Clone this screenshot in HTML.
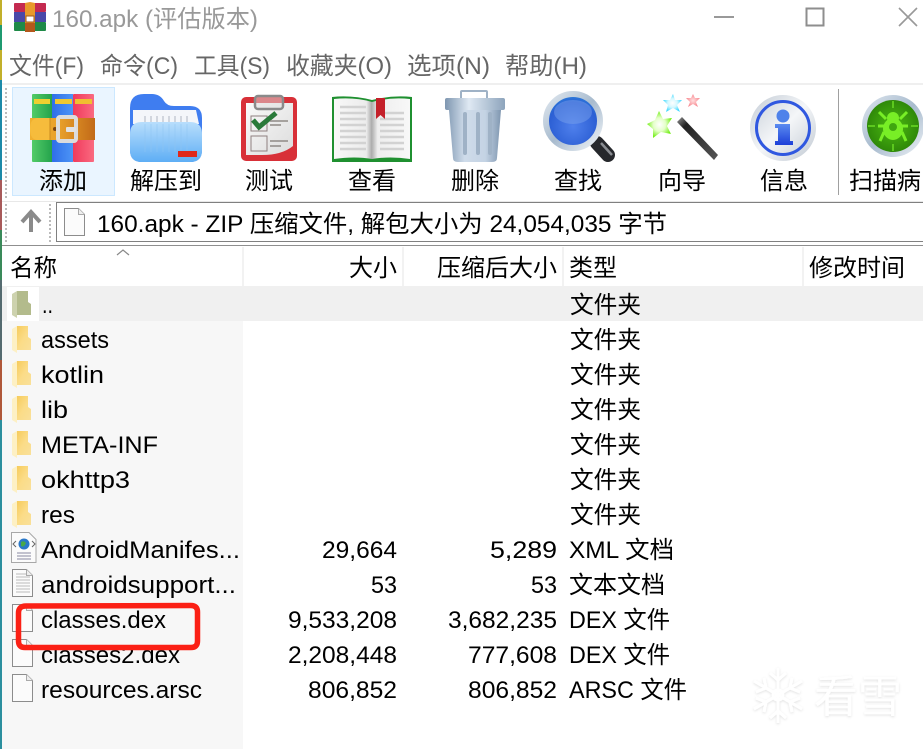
<!DOCTYPE html>
<html lang="zh"><head><meta charset="utf-8"><title>160.apk</title>
<style>
html,body{margin:0;padding:0;background:#fff;width:923px;height:749px;overflow:hidden}
svg{display:block}
text{font-family:"Liberation Sans","Noto Sans CJK SC",sans-serif;font-size:24px;fill:#000}
.t{fill:#999}.m{fill:#666}.h{fill:#1a1a1a}
</style></head><body>
<svg width="923" height="749" viewBox="0 0 923 749" xmlns="http://www.w3.org/2000/svg">
<defs>
<linearGradient id="gG" x1="0" x2="1" y1="0" y2="0"><stop offset="0" stop-color="#52cc68"/><stop offset="1" stop-color="#22a04a"/></linearGradient>
<linearGradient id="gB" x1="0" x2="1" y1="0" y2="0"><stop offset="0" stop-color="#2f6ee8"/><stop offset="1" stop-color="#4d95f6"/></linearGradient>
<linearGradient id="gR" x1="0" x2="1" y1="0" y2="0"><stop offset="0" stop-color="#f03a5c"/><stop offset="1" stop-color="#fa6a80"/></linearGradient>
<linearGradient id="gBelt" x1="0" x2="1" y1="0" y2="0"><stop offset="0" stop-color="#f0b030"/><stop offset=".45" stop-color="#e8a02a"/><stop offset="1" stop-color="#c26a18"/></linearGradient>
<linearGradient id="gFold" x1="0" x2="0" y1="0" y2="1"><stop offset="0" stop-color="#b8defc"/><stop offset="1" stop-color="#5eaef5"/></linearGradient>
<linearGradient id="gPaper" x1="0" x2="1" y1="0" y2="1"><stop offset="0" stop-color="#fafafa"/><stop offset="1" stop-color="#dcdcdc"/></linearGradient>
<linearGradient id="gPageL" x1="0" x2="1"><stop offset="0" stop-color="#f8f8f8"/><stop offset=".85" stop-color="#ececec"/><stop offset="1" stop-color="#a8a8a8"/></linearGradient>
<linearGradient id="gPageR" x1="0" x2="1"><stop offset="0" stop-color="#b0b0b0"/><stop offset=".15" stop-color="#eeeeee"/><stop offset="1" stop-color="#f8f8f8"/></linearGradient>
<linearGradient id="gTrash" x1="0" x2="1"><stop offset="0" stop-color="#8ea4bc"/><stop offset=".3" stop-color="#cfdcea"/><stop offset=".7" stop-color="#c4d3e4"/><stop offset="1" stop-color="#7f96b0"/></linearGradient>
<linearGradient id="gLid" x1="0" x2="1"><stop offset="0" stop-color="#7e96b0"/><stop offset=".4" stop-color="#dfe9f3"/><stop offset="1" stop-color="#8da4bc"/></linearGradient>
<radialGradient id="gLens" cx=".5" cy=".6" r=".6"><stop offset="0" stop-color="#4f80ec"/><stop offset=".75" stop-color="#2c5fd4"/><stop offset="1" stop-color="#2a86dc"/></radialGradient>
<linearGradient id="gRing" x1="0" x2="1" y1="0" y2="1"><stop offset="0" stop-color="#dfe7ef"/><stop offset=".5" stop-color="#a8bbce"/><stop offset="1" stop-color="#eef2f6"/></linearGradient>
<linearGradient id="gInfo" x1="0" x2="1" y1="0" y2="1"><stop offset="0" stop-color="#c4ccd6"/><stop offset=".5" stop-color="#f4f6f8"/><stop offset="1" stop-color="#c0c8d2"/></linearGradient>
<linearGradient id="gI" x1="0" x2="0" y1="0" y2="1"><stop offset="0" stop-color="#5b8cf0"/><stop offset="1" stop-color="#1c3fd8"/></linearGradient>
<radialGradient id="gScan" cx=".5" cy=".5" r=".55"><stop offset="0" stop-color="#4cba12"/><stop offset="1" stop-color="#2c8408"/></radialGradient>
<radialGradient id="gS1"><stop offset="0" stop-color="#fff"/><stop offset=".5" stop-color="#e4ffc8"/><stop offset="1" stop-color="#74ee18"/></radialGradient>
<radialGradient id="gS2"><stop offset="0" stop-color="#fff"/><stop offset=".5" stop-color="#d4f8ff"/><stop offset="1" stop-color="#40d8ff"/></radialGradient>
<radialGradient id="gS3"><stop offset="0" stop-color="#ffe0e0"/><stop offset="1" stop-color="#f88890"/></radialGradient>
<linearGradient id="gWand" x1="0" x2="1" y1="0" y2="1"><stop offset="0" stop-color="#999"/><stop offset=".2" stop-color="#222"/><stop offset="1" stop-color="#555"/></linearGradient>
<linearGradient id="gFY" x1="0" x2="1" y1="0" y2="1"><stop offset="0" stop-color="#f6cb5c"/><stop offset=".5" stop-color="#fbdc88"/><stop offset="1" stop-color="#f9e09a"/></linearGradient>
<g id="fold">
<path d="M5 0H16V11L19 13V24H5Z" fill="url(#gFY)"/>
<path d="M0 3L5 0V27L0 24Z" fill="#fdf0c4"/>
</g>
<g id="pfold">
<path d="M5 0H16V11L19 13V24H5Z" fill="#b3bb8c"/>
<path d="M0 3L5 0V27L0 24Z" fill="#cdd2ae"/>
</g>
<g id="file">
<path d="M.5 .5H14.500L20.500 6.500V27.500H.5Z" fill="#fbfbfb" stroke="#8c8c8c"/>
<path d="M14.500 .5V6.500H20.500" fill="#eee" stroke="#aaa"/>
</g>
<filter id="wm" x="-20%" y="-20%" width="140%" height="140%"><feDropShadow dx="0" dy="1" stdDeviation="1.2" flood-color="#000" flood-opacity=".12"/></filter>
</defs>

<!-- left strip -->
<rect x="0" y="0" width="2" height="749" fill="#2b8f9e"/>
<rect x="0" y="0" width="2" height="25" fill="#c2b02a"/><rect x="0" y="25" width="2" height="25" fill="#1f9a70"/>
<rect x="0" y="50" width="2" height="30" fill="#c2b02a"/><rect x="0" y="80" width="2" height="100" fill="#1d8aa8"/>
<rect x="0" y="180" width="2" height="50" fill="#a85a5a"/><rect x="0" y="230" width="2" height="50" fill="#3a8a5a"/>
<rect x="0" y="280" width="2" height="80" fill="#556b70"/><rect x="0" y="360" width="2" height="60" fill="#b0583a"/>

<!-- title bar -->
<g>
<rect x="14" y="3" width="32" height="9" rx="1" fill="#c42a50"/>
<rect x="14" y="12" width="32" height="10" fill="#4a48a8"/>
<rect x="14" y="22" width="32" height="9" rx="1" fill="#1f8a48"/>
<path d="M25 3 L30 2 L35 3 V32 H25Z" fill="#e89a2a"/>
<rect x="26" y="16" width="8" height="6" fill="#fff" stroke="#a05a18"/>
<rect x="25" y="23" width="10" height="9" fill="#b4581c"/>
</g>
<text class="t" x="52" y="27" textLength="206" lengthAdjust="spacingAndGlyphs">160.apk (评估版本)</text>
<rect x="714" y="16" width="20" height="2" fill="#999"/>
<rect x="806.500" y="8.500" width="17" height="17" fill="none" stroke="#8e8e8e" stroke-width="2"/>
<path d="M899 8L917 26M917 8L899 26" stroke="#999" stroke-width="1.600" fill="none"/>

<!-- menu -->
<g class="m">
<text class="m" x="9" y="74" textLength="75" lengthAdjust="spacingAndGlyphs">文件(F)</text>
<text class="m" x="100" y="74" textLength="78" lengthAdjust="spacingAndGlyphs">命令(C)</text>
<text class="m" x="194" y="74" textLength="76" lengthAdjust="spacingAndGlyphs">工具(S)</text>
<text class="m" x="286" y="74" textLength="106" lengthAdjust="spacingAndGlyphs">收藏夹(O)</text>
<text class="m" x="407" y="74" textLength="83" lengthAdjust="spacingAndGlyphs">选项(N)</text>
<text class="m" x="505" y="74" textLength="82" lengthAdjust="spacingAndGlyphs">帮助(H)</text>
</g>
<rect x="2" y="83" width="921" height="2" fill="#efefef"/>

<!-- toolbar grip -->
<path d="M6 88V198" stroke="#bbb" stroke-width="2" stroke-dasharray="2 2"/>
<rect x="12.500" y="87.500" width="102" height="108" fill="#eaf5ff" stroke="#cce8ff"/>

<!-- add icon -->
<rect x="32" y="94" width="21" height="68" rx="1" fill="url(#gG)"/>
<rect x="52" y="94" width="21" height="68" fill="url(#gB)"/>
<rect x="73" y="94" width="21" height="68" rx="1" fill="url(#gR)"/>
<rect x="34" y="99" width="16" height="5" fill="#eed030"/><rect x="55" y="99" width="17" height="5" fill="#f0c830"/><rect x="75" y="99" width="17" height="5" fill="#f0c030"/>
<rect x="30" y="118" width="65" height="22" fill="url(#gBelt)"/>
<path d="M50 118H38Q30 118 30 129Q30 140 38 140H50Z" fill="#f6bc3c"/>
<path d="M50 118V140" stroke="#c98a1e"/>
<circle cx="55" cy="129" r="2" fill="#7a4410"/>
<rect x="58" y="117" width="18" height="24" rx="2" fill="none" stroke="#dcdcdc" stroke-width="4"/>
<rect x="66" y="127" width="10" height="5" rx="1" fill="#e2e2e2"/>

<!-- extract icon -->
<path d="M130 108Q130 94 144 94H152Q160 94 164 101Q167 106 174 106H190Q202 106 202 118V150Q202 162 190 162H142Q130 162 130 150Z" fill="#3f7df0"/>
<path d="M133 110H196L199 124H133Z" fill="#f4f6fa"/>
<g stroke="#c6ccd4" stroke-width="1.500"><path d="M145 116V128M151 116V128M157 116V128M163 116V128M169 116V128M175 116V128M181 116V128M187 116V128"/></g>
<path d="M130 134Q130 122 142 122H190Q202 122 202 134V150Q202 162 190 162H142Q130 162 130 150Z" fill="url(#gFold)"/>
<g stroke="#8ec4f2" stroke-width="1"><path d="M145 124V152M151 124V152M157 124V152M163 124V152M169 124V152M175 124V152M181 124V152M187 124V152" opacity=".5"/></g>
<rect x="178" y="151" width="19" height="6" fill="#e0281c"/>

<!-- test icon -->
<rect x="241" y="97" width="56" height="64" rx="5" fill="#d83038"/>
<path d="M246 103H293V146Q282 155 262 155H246Z" fill="url(#gPaper)"/>
<rect x="255" y="96" width="28" height="13" rx="3" fill="#dedede" fill-opacity=".5" stroke="#8a8a8a" stroke-width="2.500"/>
<rect x="251" y="116" width="16" height="15" fill="none" stroke="#8f8080" stroke-width="1"/>
<rect x="251" y="136" width="16" height="15" fill="none" stroke="#8f8080" stroke-width="1"/>
<path d="M253 120L259 127L276 113" fill="none" stroke="#2a7a3a" stroke-width="5"/>
<path d="M270 121H288M270 125H281M270 141H288M270 146H281" stroke="#8f8a86" stroke-width="1.500"/>

<!-- view icon -->
<path d="M332 97Q352 95 372 100Q392 95 412 97V162H332Z" fill="#1f9030"/>
<path d="M334 99Q355 97 372 102V159Q355 156 334 159Z" fill="url(#gPageL)"/>
<path d="M372 102Q390 97 410 99V159Q390 156 372 159Z" fill="url(#gPageR)"/>
<g stroke="#d2d2d2" stroke-width="2.500"><path d="M340 107H366M340 113H366M340 119H366M340 125H366M340 131H366M340 137H366M340 143H366M340 149H366"/><path d="M380 113H404M380 119H404M380 125H404M380 131H404M380 137H404M380 143H404M380 149H404"/></g>
<path d="M376 98H385V119L380.500 115L376 119Z" fill="#c4202a"/>

<!-- delete icon -->
<rect x="461" y="91" width="26" height="10" rx="1" fill="none" stroke="#9fb2c6" stroke-width="2"/>
<rect x="445" y="98" width="60" height="12" rx="2" fill="url(#gLid)"/>
<path d="M449 110H501L497 158Q497 162 492 162H458Q453 162 453 158Z" fill="url(#gTrash)"/>
<g stroke="#9fb2c6" stroke-width="4" stroke-linecap="round"><path d="M465 114V153M478 114V153M490 114V153"/></g>

<!-- find icon -->
<path d="M597 143L608 155" stroke="#26282c" stroke-width="14" stroke-linecap="round"/>
<path d="M601 143L612 155" stroke="#8a8d92" stroke-width="2.500"/>
<circle cx="573" cy="121" r="27" fill="url(#gLens)" stroke="url(#gRing)" stroke-width="6"/>
<ellipse cx="573" cy="112" rx="19" ry="12" fill="#7fa6ee" opacity=".45"/>

<!-- wizard icon -->
<path d="M677 122L682 117L718 155L714 160Z" fill="url(#gWand)"/>
<path d="M659 111L663 119L672 118L667 126L671 134L661 132L653 138L653 129L647 124L655 120Z" fill="url(#gS1)"/>
<path d="M673 94L675 100L682 100L677 105L680 112L673 108L666 112L668 105L663 100L670 100Z" fill="url(#gS2)"/>
<path d="M693 94L695 98L700 98L696 102L698 107L693 104L688 107L690 102L686 98L691 98Z" fill="url(#gS3)"/>

<!-- info icon -->
<circle cx="783" cy="128" r="33" fill="url(#gInfo)"/>
<circle cx="783" cy="128" r="26.500" fill="none" stroke="#3058e0" stroke-width="3"/>
<circle cx="783" cy="116" r="6.500" fill="#4f82ea"/>
<path d="M775 124H790V141H793V145H775V141H778V128H775Z" fill="url(#gI)"/>

<!-- separator -->
<rect x="838" y="89" width="1" height="106" fill="#a0a0a0"/>

<!-- scan icon -->
<circle cx="893" cy="126" r="31" fill="url(#gRing)"/>
<circle cx="893" cy="126" r="26" fill="url(#gScan)"/>
<path d="M893 101V108M893 144V151M868 126H875M911 126H918" stroke="#5cc81e" stroke-width="2"/>
<g fill="none" stroke="#78ee26" stroke-width="3"><path d="M879 112L886 119M907 112L900 119M878 126H908M880 141L884 132M906 141L902 132"/></g>
<ellipse cx="893" cy="129" rx="10" ry="11" fill="#78ee26"/><circle cx="893" cy="118" r="6" fill="#78ee26"/>
<circle cx="893" cy="127" r="4" fill="#3fa610"/>

<!-- toolbar labels -->
<text x="39" y="189" textLength="48" lengthAdjust="spacingAndGlyphs">添加</text>
<text x="130" y="189" textLength="72" lengthAdjust="spacingAndGlyphs">解压到</text>
<text x="245" y="189" textLength="48" lengthAdjust="spacingAndGlyphs">测试</text>
<text x="348" y="189" textLength="48" lengthAdjust="spacingAndGlyphs">查看</text>
<text x="451" y="189" textLength="48" lengthAdjust="spacingAndGlyphs">删除</text>
<text x="554" y="189" textLength="48" lengthAdjust="spacingAndGlyphs">查找</text>
<text x="658" y="189" textLength="48" lengthAdjust="spacingAndGlyphs">向导</text>
<text x="760" y="189" textLength="48" lengthAdjust="spacingAndGlyphs">信息</text>
<text x="849" y="189" textLength="72" lengthAdjust="spacingAndGlyphs">扫描病</text>

<!-- address bar -->
<rect x="2" y="201" width="921" height="1" fill="#e8e8e8"/>
<path d="M6 204V243M50 204V243" stroke="#bbb" stroke-width="2" stroke-dasharray="2 2"/>
<path d="M31 212V232M22 222L31 212L40 222" fill="none" stroke="#8a8a8a" stroke-width="4"/>
<path d="M923 202.500H56.500V241.500H923" fill="#fff" stroke="#808080"/>
<use href="#file" x="64" y="208"/>
<text x="97" y="232" textLength="570" lengthAdjust="spacingAndGlyphs">160.apk - ZIP 压缩文件, 解包大小为 24,054,035 字节</text>
<rect x="2" y="245" width="921" height="1" fill="#8f8f8f"/>

<!-- list backgrounds -->
<rect x="2" y="286" width="241" height="463" fill="#f7f7f7"/>
<rect x="2" y="286" width="921" height="35" fill="#f0f0f0"/>
<rect x="7" y="287" width="32" height="34" fill="#fff"/>

<!-- header -->
<path d="M243 247V286M403 247V286M563 247V286M803 247V286" stroke="#e5e5e5"/>
<path d="M117 255L123 250L129 255" fill="none" stroke="#888" stroke-width="1.200"/>
<g class="h">
<text x="10" y="276" textLength="47" lengthAdjust="spacingAndGlyphs">名称</text>
<text x="349" y="276" textLength="48" lengthAdjust="spacingAndGlyphs">大小</text>
<text x="437" y="276" textLength="120" lengthAdjust="spacingAndGlyphs">压缩后大小</text>
<text x="569" y="276" textLength="48" lengthAdjust="spacingAndGlyphs">类型</text>
<text x="809" y="276" textLength="96" lengthAdjust="spacingAndGlyphs">修改时间</text>
</g>

<!-- list icons -->
<use href="#pfold" x="12" y="291"/>
<use href="#fold" x="12" y="326"/><use href="#fold" x="12" y="361"/><use href="#fold" x="12" y="396"/>
<use href="#fold" x="12" y="431"/><use href="#fold" x="12" y="466"/><use href="#fold" x="12" y="501"/>
<g>
<path d="M11.500 532.500H29L36 539.500V562.500H11.500Z" fill="#fbfbfb" stroke="#a8a8a8"/>
<circle cx="24" cy="544" r="5.500" fill="#2a78c8"/><path d="M21 542Q24 540 26 543Q24 548 21 546Z" fill="#48a848"/>
<path d="M16 541L13 544L16 547M32 541L35 544L32 547" stroke="#666" fill="none"/>
<path d="M17 553H31M17 556H31M17 559H31" stroke="#8888a0"/>
</g>
<g><use href="#file" x="12" y="569"/><path d="M16 574H26M16 577H30M16 580H30M16 583H30M16 586H30M16 589H30M16 592H30" stroke="#bbb"/></g>
<use href="#file" x="12" y="604"/><use href="#file" x="12" y="639"/><use href="#file" x="12" y="674"/>

<!-- names -->
<text x="42" y="313" textLength="11" lengthAdjust="spacingAndGlyphs">..</text>
<text x="41" y="348" textLength="68" lengthAdjust="spacingAndGlyphs">assets</text>
<text x="41" y="383" textLength="63" lengthAdjust="spacingAndGlyphs">kotlin</text>
<text x="41" y="418" textLength="27" lengthAdjust="spacingAndGlyphs">lib</text>
<text x="41" y="453" textLength="117" lengthAdjust="spacingAndGlyphs">META-INF</text>
<text x="41" y="488" textLength="89" lengthAdjust="spacingAndGlyphs">okhttp3</text>
<text x="41" y="523" textLength="34" lengthAdjust="spacingAndGlyphs">res</text>
<text x="41" y="558" textLength="199" lengthAdjust="spacingAndGlyphs">AndroidManifes...</text>
<text x="41" y="593" textLength="195" lengthAdjust="spacingAndGlyphs">androidsupport...</text>
<text x="41" y="628" textLength="125" lengthAdjust="spacingAndGlyphs">classes.dex</text>
<text x="41" y="663" textLength="139" lengthAdjust="spacingAndGlyphs">classes2.dex</text>
<text x="41" y="698" textLength="161" lengthAdjust="spacingAndGlyphs">resources.arsc</text>

<!-- sizes -->
<text x="322" y="558" textLength="75" lengthAdjust="spacingAndGlyphs">29,664</text>
<text x="371" y="593" textLength="26" lengthAdjust="spacingAndGlyphs">53</text>
<text x="288" y="628" textLength="109" lengthAdjust="spacingAndGlyphs">9,533,208</text>
<text x="288" y="663" textLength="109" lengthAdjust="spacingAndGlyphs">2,208,448</text>
<text x="308" y="698" textLength="89" lengthAdjust="spacingAndGlyphs">806,852</text>
<text x="490" y="558" textLength="67" lengthAdjust="spacingAndGlyphs">5,289</text>
<text x="531" y="593" textLength="26" lengthAdjust="spacingAndGlyphs">53</text>
<text x="448" y="628" textLength="109" lengthAdjust="spacingAndGlyphs">3,682,235</text>
<text x="468" y="663" textLength="89" lengthAdjust="spacingAndGlyphs">777,608</text>
<text x="468" y="698" textLength="89" lengthAdjust="spacingAndGlyphs">806,852</text>

<!-- types -->
<text x="570" y="313" textLength="71" lengthAdjust="spacingAndGlyphs">文件夹</text>
<text x="570" y="348" textLength="71" lengthAdjust="spacingAndGlyphs">文件夹</text>
<text x="570" y="383" textLength="71" lengthAdjust="spacingAndGlyphs">文件夹</text>
<text x="570" y="418" textLength="71" lengthAdjust="spacingAndGlyphs">文件夹</text>
<text x="570" y="453" textLength="71" lengthAdjust="spacingAndGlyphs">文件夹</text>
<text x="570" y="488" textLength="71" lengthAdjust="spacingAndGlyphs">文件夹</text>
<text x="570" y="523" textLength="71" lengthAdjust="spacingAndGlyphs">文件夹</text>
<text x="569" y="558" textLength="105" lengthAdjust="spacingAndGlyphs">XML 文档</text>
<text x="569" y="593" textLength="96" lengthAdjust="spacingAndGlyphs">文本文档</text>
<text x="569" y="628" textLength="101" lengthAdjust="spacingAndGlyphs">DEX 文件</text>
<text x="569" y="663" textLength="101" lengthAdjust="spacingAndGlyphs">DEX 文件</text>
<text x="569" y="698" textLength="118" lengthAdjust="spacingAndGlyphs">ARSC 文件</text>

<!-- red annotation -->
<path d="M26 606L191 605.500Q197.500 605.500 197.500 612V641Q197.500 647.500 191 647.500H25Q18.500 647.500 18.500 641V613Q18.500 606 26 606Z" fill="none" stroke="#fb2015" stroke-width="5.500"/>

<!-- watermark -->
<g filter="url(#wm)">
<g stroke="#fff" stroke-width="3" fill="none">
<path d="M778 668V723M754 681L802 709M802 681L754 709"/>
<path d="M770 673L778 680L786 673M770 718L778 711L786 718M756 692L766 688L764 678M800 692L790 688L792 678M756 698L766 702L764 712M800 698L790 702L792 712"/>
<circle cx="778" cy="695" r="5"/>
</g>
<text x="814" y="712" textLength="88" lengthAdjust="spacingAndGlyphs" style="font-size:44px;fill:#fff">看雪</text>
</g>
</svg>
</body></html>
